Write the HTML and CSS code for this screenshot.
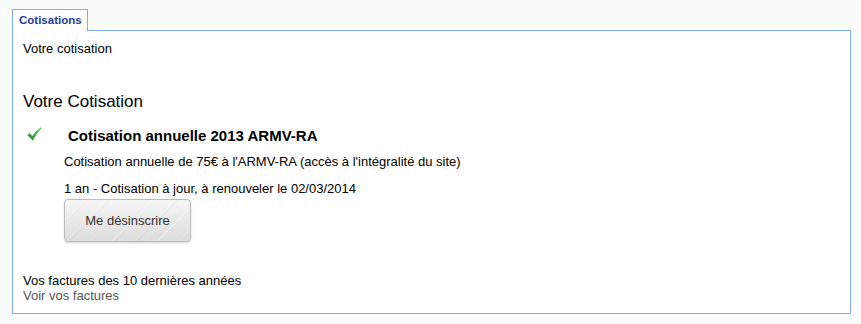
FILE: index.html
```html
<!DOCTYPE html>
<html lang="fr">
<head>
<meta charset="utf-8">
<title>Cotisations</title>
<link rel="stylesheet" href="styles.css">
</head>
<body>
<div class="page">
  <div class="tabs"><span class="tab">Cotisations</span></div>
  <div class="panel">
    <p class="intro">Votre cotisation</p>
    <h2 class="heading">Votre Cotisation</h2>
    <div class="item">
      <div class="item-icon">
        <svg width="15" height="14" viewBox="0 0 15 14">
          <defs>
            <linearGradient id="g" x1="0" y1="1" x2="1" y2="0">
              <stop offset="0" stop-color="#1c8a22"/>
              <stop offset="1" stop-color="#79d46a"/>
            </linearGradient>
          </defs>
          <path d="M0.3 8 L2.6 5.9 L5.3 9 Q8.6 3.6 14 0.3 L14.7 1.5 Q9.9 5.8 5.9 13.7 Z" fill="url(#g)"/>
        </svg>
      </div>
      <div class="item-body">
        <h3 class="item-title">Cotisation annuelle 2013 ARMV-RA</h3>
        <p class="item-line">Cotisation annuelle de 75€ à l'ARMV-RA (accès à l'intégralité du site)</p>
        <p class="item-line second">1 an - Cotisation à jour, à renouveler le 02/03/2014</p>
        <button class="btn" type="button">Me désinscrire</button>
      </div>
    </div>
    <div class="invoices">
      <div>Vos factures des 10 dernières années</div>
      <a class="link" href="#">Voir vos factures</a>
    </div>
  </div>
</div>
</body>
</html>
```
FILE: styles.css
```css
html, body {
  margin: 0;
  padding: 0;
  background: #fafcfb;
}
body {
  font-family: "Liberation Sans", Arial, sans-serif;
  font-size: 13px;
  color: #000;
}
.page {
  padding: 9px 10px 0 12px;
}
.tabs {
  display: flex;
  height: 21px;
}
.tab {
  display: block;
  box-sizing: border-box;
  width: 76px;
  height: 22px;
  border: 1px solid #7eaaf6;
  border-bottom: none;
  background: #fff;
  color: #1d3a9e;
  font-weight: bold;
  font-size: 11.5px;
  line-height: 20px;
  padding-left: 6px;
  position: relative;
  z-index: 1;
}
.panel {
  box-sizing: border-box;
  height: 284px;
  border: 1px solid #7eaaf6;
  background: #fff;
  padding: 10px 10px 8px 10px;
}
.intro {
  margin: 0;
  line-height: 16px;
}
.heading {
  margin: 35px 0 0 0;
  font-size: 17px;
  font-weight: normal;
  line-height: 20px;
}
.item {
  display: flex;
  margin-top: 15px;
}
.item-icon {
  width: 41px;
  padding-left: 4px;
  box-sizing: border-box;
}
.item-icon svg {
  display: block;
}
.item-body {
  display: flex;
  flex-direction: column;
  align-items: flex-start;
}
.item-title {
  margin: 0;
  padding-left: 4px;
  font-size: 15px;
  font-weight: bold;
  line-height: 18px;
}
.item-line {
  margin: 9px 0 0 0;
  line-height: 16px;
}
.item-line.second {
  margin-top: 11px;
}
.btn {
  margin-top: 2px;
  width: 127px;
  height: 43px;
  border: 1px solid #bcbcbc;
  border-radius: 4px;
  background:
    repeating-linear-gradient(135deg, rgba(255,255,255,0) 0 14px, rgba(255,255,255,0.35) 14px 15px, rgba(0,0,0,0.025) 15px 16px),
    linear-gradient(#f6f6f6, #dcdcdc);
  box-shadow: 0 1px 2px rgba(0,0,0,0.18);
  font-family: "Liberation Sans", Arial, sans-serif;
  font-size: 13px;
  color: #333;
  padding: 0;
}
.invoices {
  margin-top: 31px;
  line-height: 15px;
}
.link {
  color: #555;
  text-decoration: none;
}
```
